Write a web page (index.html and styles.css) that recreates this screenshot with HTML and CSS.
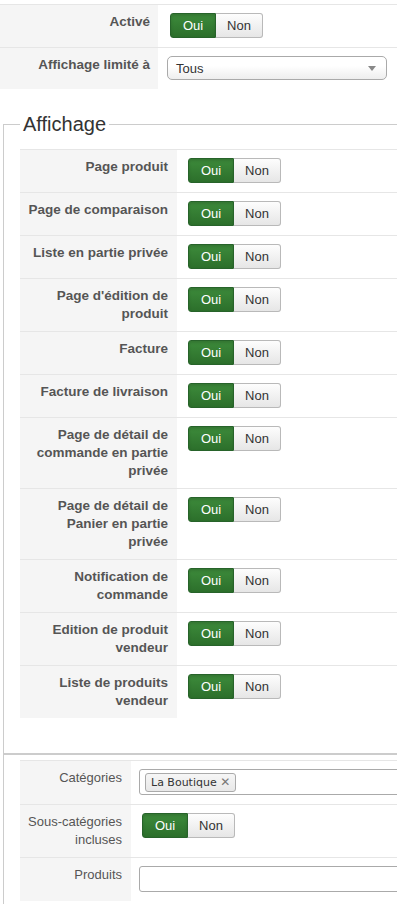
FILE: index.html
```html
<!DOCTYPE html>
<html lang="fr">
<head>
    <meta charset="UTF-8">
    <meta name="viewport" content="width=device-width, initial-scale=1.0">
    <title>Affichage</title>
    <link rel="stylesheet" href="styles.css">
</head>
<body>
<div class="page">
    <div class="table top-table">
        <div class="row">
            <div class="label">Activé</div>
            <div class="field">
                <div class="switch"><span class="on">Oui</span><span class="off">Non</span></div>
            </div>
        </div>
        <div class="row">
            <div class="label">Affichage limité à</div>
            <div class="field">
                <div class="select">Tous<span class="caret"></span></div>
            </div>
        </div>
    </div>

    <fieldset class="box">
        <legend>Affichage</legend>
        <div class="table display-table">
            <div class="row">
                <div class="label">Page produit</div>
                <div class="field"><div class="switch"><span class="on">Oui</span><span class="off">Non</span></div></div>
            </div>
            <div class="row">
                <div class="label">Page de comparaison</div>
                <div class="field"><div class="switch"><span class="on">Oui</span><span class="off">Non</span></div></div>
            </div>
            <div class="row">
                <div class="label">Liste en partie privée</div>
                <div class="field"><div class="switch"><span class="on">Oui</span><span class="off">Non</span></div></div>
            </div>
            <div class="row">
                <div class="label">Page d'édition de produit</div>
                <div class="field"><div class="switch"><span class="on">Oui</span><span class="off">Non</span></div></div>
            </div>
            <div class="row">
                <div class="label">Facture</div>
                <div class="field"><div class="switch"><span class="on">Oui</span><span class="off">Non</span></div></div>
            </div>
            <div class="row">
                <div class="label">Facture de livraison</div>
                <div class="field"><div class="switch"><span class="on">Oui</span><span class="off">Non</span></div></div>
            </div>
            <div class="row">
                <div class="label">Page de détail de commande en partie privée</div>
                <div class="field"><div class="switch"><span class="on">Oui</span><span class="off">Non</span></div></div>
            </div>
            <div class="row">
                <div class="label">Page de détail de Panier en partie privée</div>
                <div class="field"><div class="switch"><span class="on">Oui</span><span class="off">Non</span></div></div>
            </div>
            <div class="row">
                <div class="label">Notification de commande</div>
                <div class="field"><div class="switch"><span class="on">Oui</span><span class="off">Non</span></div></div>
            </div>
            <div class="row">
                <div class="label">Edition de produit vendeur</div>
                <div class="field"><div class="switch"><span class="on">Oui</span><span class="off">Non</span></div></div>
            </div>
            <div class="row">
                <div class="label">Liste de produits vendeur</div>
                <div class="field"><div class="switch"><span class="on">Oui</span><span class="off">Non</span></div></div>
            </div>
        </div>
    </fieldset>

    <fieldset class="box box-filter">
        <div class="table filter-table">
            <div class="row">
                <div class="label">Catégories</div>
                <div class="field">
                    <div class="tags"><span class="tag">La Boutique <span class="tag-close">&#x2715;</span></span></div>
                </div>
            </div>
            <div class="row">
                <div class="label">Sous-catégories incluses</div>
                <div class="field">
                    <div class="switch"><span class="on">Oui</span><span class="off">Non</span></div>
                </div>
            </div>
            <div class="row">
                <div class="label">Produits</div>
                <div class="field">
                    <div class="tags"></div>
                </div>
            </div>
        </div>
    </fieldset>
</div>
</body>
</html>
```

FILE: styles.css
```css
body {
    margin: 0;
    font-family: "Liberation Sans", Arial, sans-serif;
    font-size: 13px;
    color: #555;
    background-color: #fff;
    overflow: hidden;
}
.page {
    width: 440px;
    padding-top: 4px;
}
.table {
    border-top: 1px solid #e6e6e6;
}
.row {
    display: flex;
}
.row + .row {
    border-top: 1px solid #e6e6e6;
}
.label {
    flex: none;
    box-sizing: border-box;
    padding: 8px 9px 8px 6px;
    line-height: 18px;
    text-align: right;
    font-size: 13.5px;
    font-weight: bold;
    background-color: #f5f5f5;
}
.field {
    flex: 1;
    padding: 8px 0 9px 11px;
}
.top-table .label {
    width: 158px;
    padding-right: 8px;
}
.top-table .field {
    padding-left: 12px;
}
.display-table .label {
    width: 157px;
}
.filter-table .label {
    width: 111px;
    font-size: 13px;
    font-weight: normal;
}
.filter-table .field {
    padding-left: 8px;
}
.filter-table .switch {
    margin-left: 3px;
}

/* oui / non switch */
.switch {
    display: inline-flex;
    height: 25px;
    font-size: 13px;
    line-height: 23px;
}
.switch span {
    box-sizing: border-box;
    text-align: center;
    border: 1px solid #b9b9b9;
}
.switch .on {
    width: 46px;
    color: #fff;
    background: linear-gradient(#3d8b3b, #2c6f2b);
    border-color: #27632a;
    border-radius: 3px 0 0 3px;
    box-shadow: inset 0 2px 3px rgba(0, 0, 0, 0.15);
}
.switch .off {
    width: 47px;
    color: #333;
    background: linear-gradient(#fdfdfd, #e6e6e6);
    border-left: none;
    border-radius: 0 3px 3px 0;
}

.select {
    position: relative;
    box-sizing: border-box;
    width: 220px;
    height: 24px;
    margin-left: -3px;
    padding-left: 8px;
    line-height: 23px;
    color: #333;
    border: 1px solid #aaa;
    border-radius: 5px;
    background: linear-gradient(#fff 40%, #eee);
}
.caret {
    position: absolute;
    right: 10px;
    top: 9px;
    border-left: 4px solid transparent;
    border-right: 4px solid transparent;
    border-top: 5px solid #888;
}

/* fieldsets */
.box {
    margin: 23px 0 0 3px;
    padding: 13px 0 35px 16px;
    border: 1px solid #ccc;
}
.box legend {
    padding: 0 3px;
    font-size: 20px;
    line-height: 24px;
    color: #333;
}
.box-filter {
    margin-top: 0;
    padding: 5px 0 60px 16px;
}

.tags {
    box-sizing: border-box;
    height: 26px;
    padding: 3px 0 0 5px;
    border: 1px solid #aaa;
    border-radius: 3px;
    background-color: #fff;
}
.tag {
    display: inline-block;
    box-sizing: border-box;
    height: 19px;
    padding: 0 5px;
    font-family: "DejaVu Sans", Verdana, sans-serif;
    font-size: 11px;
    line-height: 17px;
    color: #333;
    border: 1px solid #aaa;
    border-radius: 3px;
    background: linear-gradient(#f6f6f6, #e8e8e8);
}
.tag-close {
    font-size: 12px;
    font-weight: bold;
    color: #777;
}
```
